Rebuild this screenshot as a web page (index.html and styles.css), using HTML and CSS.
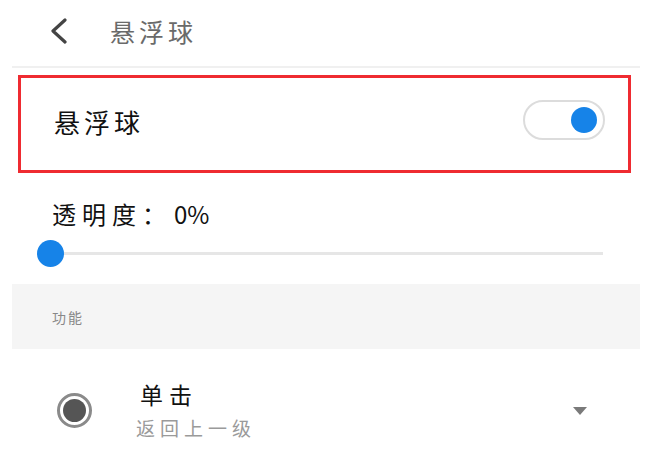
FILE: index.html
```html
<!DOCTYPE html>
<html lang="zh">
<head>
<meta charset="utf-8">
<link rel="stylesheet" href="styles.css">
</head>
<body>
<div class="page">
  <header class="header">
    <svg class="back" width="22" height="26" viewBox="0 0 22 26"><path d="M17 2 L5 13 L17 24" fill="none" stroke="#444" stroke-width="3.2" stroke-linecap="round" stroke-linejoin="round"/></svg>
    <span class="title">悬浮球</span>
  </header>
  <div class="divider"></div>
  <div class="highlight">
    <span class="row-label">悬浮球</span>
    <div class="switch"><div class="knob"></div></div>
  </div>
  <div class="opacity">
    <div class="opacity-label">透明度：<span class="value">0%</span></div>
    <div class="slider"><div class="track"></div><div class="thumb"></div></div>
  </div>
  <div class="section">功能</div>
  <div class="item">
    <div class="radio"><div class="dot"></div></div>
    <div class="texts">
      <div class="item-title">单击</div>
      <div class="item-sub">返回上一级</div>
    </div>
    <div class="caret"></div>
  </div>
</div>
</body>
</html>
```

FILE: styles.css
```css
html, body {
  margin: 0;
  padding: 0;
  background: #fff;
}
.page {
  width: 650px;
  height: 459px;
  overflow: hidden;
  font-family: "Noto Sans CJK SC", "Noto Sans", sans-serif;
}
.header {
  height: 66px;
  display: flex;
  align-items: center;
  padding-left: 48px;
}
.back {
  display: block;
  margin-top: -4px;
}
.title {
  margin-left: 40px;
  font-size: 25px;
  letter-spacing: 4px;
  color: #6a6a6a;
  margin-top: -4px;
}
.divider {
  margin: 0 10px 0 12px;
  height: 2px;
  background: #f0f0f0;
}
.highlight {
  margin: 7px 19px 0 18px;
  height: 92px;
  border: 3px solid #ef2b31;
  display: flex;
  align-items: center;
  justify-content: space-between;
  padding: 0 23px 0 33px;
}
.row-label {
  font-size: 26px;
  letter-spacing: 4px;
  color: #111;
  margin-top: -6px;
}
.switch {
  width: 72px;
  height: 36px;
  border: 2px solid #dcdcdc;
  border-radius: 20px;
  display: flex;
  align-items: center;
  justify-content: flex-end;
  padding-right: 6px;
  margin-top: -8px;
}
.knob {
  width: 26px;
  height: 26px;
  border-radius: 50%;
  background: #1683e8;
}
.opacity {
  padding: 26px 0 0 0;
}
.opacity-label {
  padding-left: 52px;
  font-size: 24px;
  line-height: 30px;
  letter-spacing: 6px;
  color: #111;
}
.value {
  letter-spacing: 0;
  margin-left: 2px;
}
.slider {
  position: relative;
  height: 28px;
  margin: 10px 47px 0 37px;
}
.track {
  position: absolute;
  left: 10px;
  right: 0;
  top: 13px;
  height: 3px;
  background: #e6e6e6;
}
.thumb {
  position: absolute;
  left: 0;
  top: 1px;
  width: 27px;
  height: 27px;
  border-radius: 50%;
  background: #1683e8;
}
.section {
  margin: 17px 10px 0 12px;
  height: 65px;
  background: #f5f5f5;
  display: flex;
  align-items: center;
  padding-left: 40px;
  font-size: 14px;
  letter-spacing: 2px;
  color: #888;
}
.item {
  display: flex;
  align-items: center;
  padding: 30px 0 0 57px;
}
.radio {
  width: 29px;
  height: 29px;
  border: 3px solid #8a8a8a;
  border-radius: 50%;
  display: flex;
  align-items: center;
  justify-content: center;
}
.dot {
  width: 23px;
  height: 23px;
  border-radius: 50%;
  background: #555;
}
.texts {
  margin-left: 44px;
  flex: 1;
}
.item-title {
  font-size: 23px;
  line-height: 30px;
  letter-spacing: 6px;
  color: #111;
  padding-left: 4px;
}
.item-sub {
  font-size: 19px;
  line-height: 26px;
  letter-spacing: 5px;
  color: #9a9a9a;
  margin-top: 6px;
}
.caret {
  width: 0;
  height: 0;
  border-left: 7px solid transparent;
  border-right: 7px solid transparent;
  border-top: 8px solid #7a7a7a;
  margin-right: 63px;
  margin-top: 2px;
}
```
